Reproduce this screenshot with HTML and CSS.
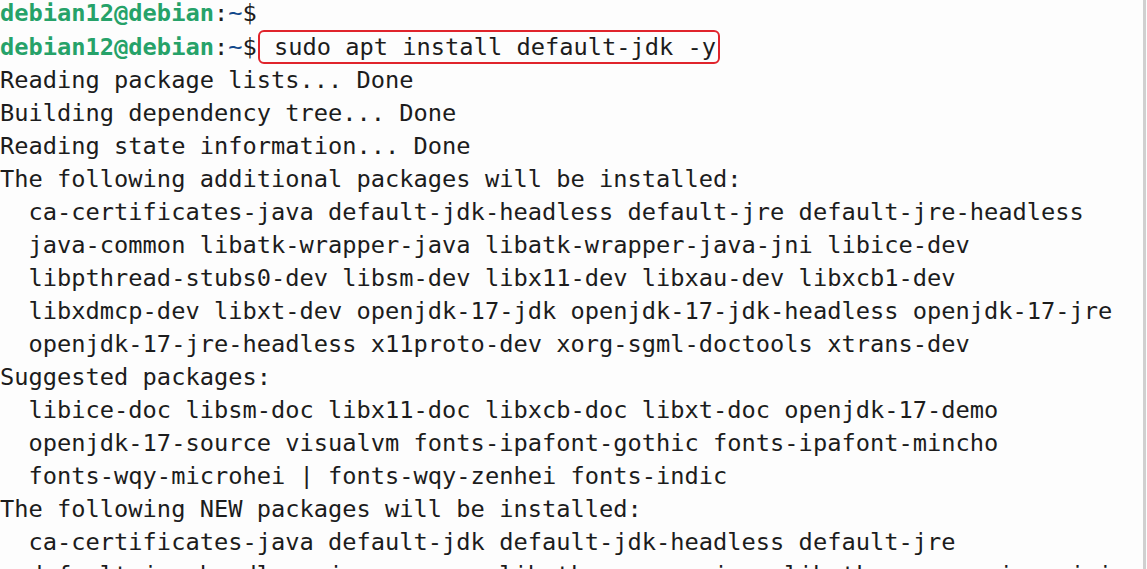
FILE: index.html
```html
<!DOCTYPE html>
<html lang="en">
<head>
  <meta charset="UTF-8">
  <title>Terminal</title>
  <link rel="stylesheet" href="styles.css">
</head>
<body>
  <div class="terminal">
<pre class="output"><span class="user">debian12@debian</span>:<span class="path">~</span>$
<span class="user">debian12@debian</span>:<span class="path">~</span>$<span class="highlight"> sudo apt install default-jdk -y</span>
Reading package lists... Done
Building dependency tree... Done
Reading state information... Done
The following additional packages will be installed:
  ca-certificates-java default-jdk-headless default-jre default-jre-headless
  java-common libatk-wrapper-java libatk-wrapper-java-jni libice-dev
  libpthread-stubs0-dev libsm-dev libx11-dev libxau-dev libxcb1-dev
  libxdmcp-dev libxt-dev openjdk-17-jdk openjdk-17-jdk-headless openjdk-17-jre
  openjdk-17-jre-headless x11proto-dev xorg-sgml-doctools xtrans-dev
Suggested packages:
  libice-doc libsm-doc libx11-doc libxcb-doc libxt-doc openjdk-17-demo
  openjdk-17-source visualvm fonts-ipafont-gothic fonts-ipafont-mincho
  fonts-wqy-microhei | fonts-wqy-zenhei fonts-indic
The following NEW packages will be installed:
  ca-certificates-java default-jdk default-jdk-headless default-jre
  default-jre-headless java-common libatk-wrapper-java libatk-wrapper-java-jni</pre>
  </div>
</body>
</html>
```

FILE: styles.css
```css
html, body {
  margin: 0;
  height: 100%;
  overflow: hidden;
  background-color: #fdfdfd;
}

.terminal {
  height: 100%;
  border-right: 3px solid #d0d0d0;
  margin-right: 1px;
  overflow: hidden;
}

.output {
  margin: -3px 0 0 0;
  font-family: "DejaVu Sans Mono", monospace;
  font-size: 23.7px;
  line-height: 33px;
  color: #1c1c1c;
  white-space: pre;
}

.user {
  color: #26a269;
  font-weight: bold;
}

.path {
  color: #12488b;
}

.highlight {
  display: inline-block;
  line-height: 30px;
  margin-left: 1px;
  padding-right: 2px;
  border: 2px solid #e0242c;
  border-radius: 6px;
}
```
